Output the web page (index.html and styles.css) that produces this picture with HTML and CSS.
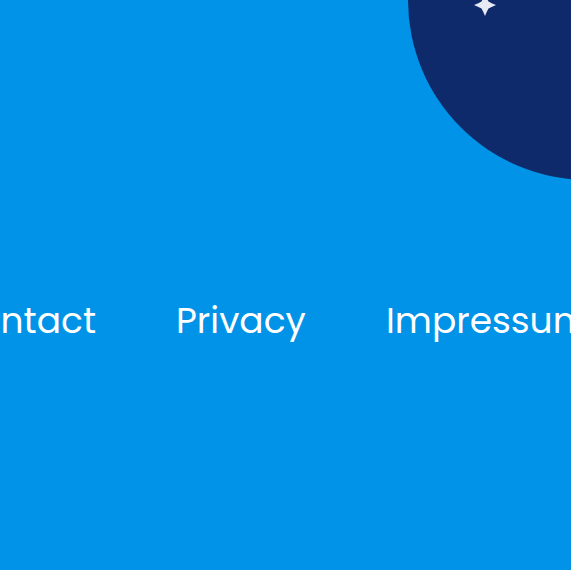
FILE: index.html
```html
<!DOCTYPE html>
<html lang="en">
<head>
<meta charset="utf-8">
<meta name="viewport" content="width=device-width, initial-scale=1">
<title>Footer</title>
<link rel="stylesheet" href="styles.css">
</head>
<body>
<footer class="footer">
  <div class="night" aria-hidden="true">
    <svg class="star" viewBox="0 0 22 22"><path d="M11 0Q13 5 14.500 7.500Q17 9 22 11Q17 13 14.500 14.500Q13 17 11 22Q9 17 7.500 14.500Q5 13 0 11Q5 9 7.500 7.500Q9 5 11 0Z"/></svg>
  </div>
  <nav class="links" aria-label="Footer">
    <a class="link link-end" href="#contact">Contact</a>
    <a class="link" href="#privacy">Privacy</a>
    <a class="link" href="#impressum">Impressum</a>
  </nav>
</footer>
</body>
</html>
```
FILE: styles.css
```css
body {
  margin: 0;
  background: #0093e7;
  font-family: Poppins, Inter, sans-serif;
}

.footer {
  position: relative;
  box-sizing: border-box;
  min-height: 100vh;
  padding-top: 293px;
  overflow: hidden;
}

/* Decorative night-sky disc running off the top right corner */
.night {
  position: absolute;
  top: -180px;
  right: -197px;
  width: 360px;
  height: 360px;
  border-radius: 50%;
  background: #0f2a6a;
}

.star {
  position: absolute;
  top: 174px;
  left: 66px;
  width: 22px;
  height: 22px;
  fill: #e7e9f5;
}

.links {
  display: grid;
  grid-template-columns: 96px 130px 1fr;
  column-gap: 80px;
}

.link {
  color: #fff;
  font-size: 36px;
  line-height: 56px;
  text-decoration: none;
  white-space: nowrap;
}

.link-end {
  justify-self: end;
}
```
